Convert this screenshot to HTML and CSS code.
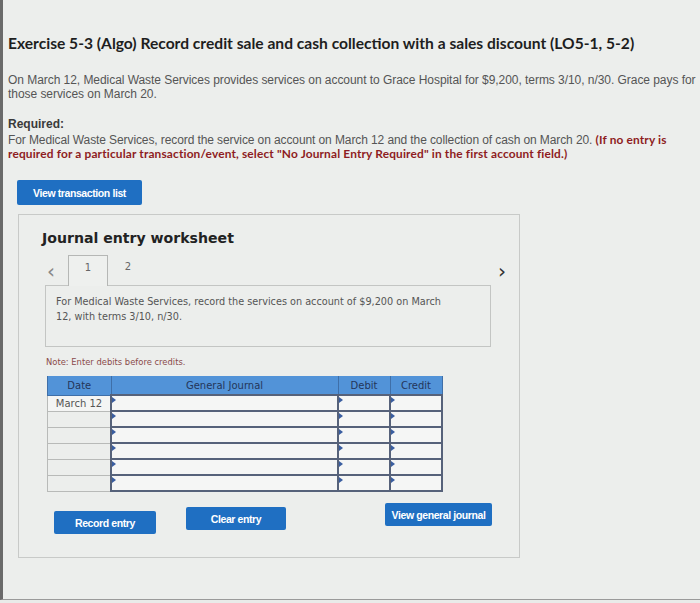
FILE: index.html
```html
<!DOCTYPE html>
<html lang="en">
<head>
    <meta charset="UTF-8">
    <meta name="viewport" content="width=device-width, initial-scale=1.0">
    <title>Exercise 5-3 (Algo)</title>
    <link rel="stylesheet" href="styles.css">
</head>
<body>
  <div class="page">
    <h1 class="title">Exercise 5-3 (Algo) Record credit sale and cash collection with a sales discount (LO5-1, 5-2)</h1>

    <p class="intro">On March 12, Medical Waste Services provides services on account to Grace Hospital for $9,200, terms 3/10, n/30. Grace pays for<br>those services on March 20.</p>

    <div class="required">
        <div class="req-label">Required:</div>
        <p>For Medical Waste Services, record the service on account on March 12 and the collection of cash on March 20. <strong class="warn">(If no entry is<br>required for a particular transaction/event, select "No Journal Entry Required" in the first account field.)</strong></p>
    </div>

    <button class="btn btn-list">View transaction list</button>

    <div class="worksheet">
        <h2>Journal entry worksheet</h2>

        <div class="tabs">
            <span class="arrow">&lsaquo;</span>
            <span class="tab active">1</span>
            <span class="tab">2</span>
            <span class="arrow arrow-next">&rsaquo;</span>
        </div>

        <div class="tab-body">
            For Medical Waste Services, record the services on account of $9,200 on March<br>12, with terms 3/10, n/30.
        </div>

        <p class="note">Note: Enter debits before credits.</p>

        <table class="journal">
            <thead>
                <tr>
                    <th class="c-date">Date</th>
                    <th class="c-gj">General Journal</th>
                    <th class="c-amt">Debit</th>
                    <th class="c-amt">Credit</th>
                </tr>
            </thead>
            <tbody>
                <tr><td class="c-date">March 12</td><td class="c-gj"></td><td class="c-amt"></td><td class="c-amt"></td></tr>
                <tr><td class="c-date"></td><td class="c-gj"></td><td class="c-amt"></td><td class="c-amt"></td></tr>
                <tr><td class="c-date"></td><td class="c-gj"></td><td class="c-amt"></td><td class="c-amt"></td></tr>
                <tr><td class="c-date"></td><td class="c-gj"></td><td class="c-amt"></td><td class="c-amt"></td></tr>
                <tr><td class="c-date"></td><td class="c-gj"></td><td class="c-amt"></td><td class="c-amt"></td></tr>
                <tr><td class="c-date"></td><td class="c-gj"></td><td class="c-amt"></td><td class="c-amt"></td></tr>
            </tbody>
        </table>

        <div class="actions">
            <button class="btn btn-record">Record entry</button>
            <button class="btn btn-clear">Clear entry</button>
            <button class="btn btn-view">View general journal</button>
        </div>
    </div>
  </div>
</body>
</html>
```

FILE: styles.css
```css
html, body {
    margin: 0;
    padding: 0;
    height: 100%;
}
body {
    background-color: #e9ebe9;
    font-family: "Liberation Sans", Arial, sans-serif;
    color: #333;
}
.page {
    height: 600px;
    border-left: 3px solid #6a6a6a;
    border-bottom: 1px solid #9a9a9a;
    background: #eceeec;
    padding: 34px 0 0 5px;
    box-sizing: border-box;
    overflow: hidden;
}
.title {
    font-family: Lato, "Open Sans", sans-serif;
    font-size: 15.6px;
    font-weight: 700;
    color: #1e1e1e;
    margin: 0 0 21px 0;
    letter-spacing: 0;
}
.intro {
    font-size: 12px;
    letter-spacing: -0.05px;
    line-height: 14px;
    color: #555;
    margin: 0 0 16px 0;
    white-space: nowrap;
}
.required {
    font-size: 12px;
    letter-spacing: -0.1px;
    line-height: 14px;
    color: #555;
    margin-bottom: 19px;
}
.req-label {
    font-weight: 700;
    color: #3a3a3a;
    letter-spacing: 0;
    margin-bottom: 2px;
}
.required p {
    margin: 0;
    white-space: nowrap;
}
.warn {
    font-family: Lato, sans-serif;
    color: #8e1c22;
    font-size: 11.9px;
    letter-spacing: 0.15px;
}
.btn {
    background-color: #1f6fc2;
    color: white;
    border: none;
    border-radius: 2px;
    font-family: "Liberation Sans", Arial, sans-serif;
    font-weight: 700;
    font-size: 10.5px;
    letter-spacing: -0.4px;
    cursor: pointer;
    padding: 0;
}
.btn-list {
    width: 125px;
    height: 25px;
    margin-left: 9px;
    display: block;
}
.worksheet {
    margin: 9px 0 0 10px;
    width: 502px;
    height: 344px;
    box-sizing: border-box;
    border: 1px solid #c8cac8;
    padding: 15px 0 0 23px;
}
.worksheet h2 {
    font-family: "DejaVu Sans", Verdana, sans-serif;
    font-size: 14.1px;
    font-weight: 700;
    color: #222;
    margin: 0 0 9px 0;
}
.tabs {
    display: flex;
    align-items: flex-end;
    height: 31px;
    margin-left: 5px;
    width: 472px;
    font-family: "DejaVu Sans", Verdana, sans-serif;
    font-size: 10px;
    color: #666;
}
.arrow {
    font-size: 20px;
    line-height: 20px;
    color: #888;
    width: 21px;
    align-self: center;
}
.arrow-next {
    margin-left: auto;
    color: #333;
}
.tab {
    width: 40px;
    height: 31px;
    line-height: 24px;
    text-align: center;
    box-sizing: border-box;
}
.tab.active {
    border: 1px solid #b5b7b5;
    border-bottom: none;
    background: #eef0ee;
    position: relative;
    z-index: 1;
}
.tab-body {
    margin-left: 3px;
    width: 446px;
    height: 62px;
    box-sizing: border-box;
    border: 1px solid #c3c5c3;
    margin-top: -1px;
    padding: 8px 0 0 10px;
    font-family: "DejaVu Sans", Verdana, sans-serif;
    font-size: 9.7px;
    line-height: 15px;
    color: #555;
    white-space: nowrap;
}
.note {
    font-family: "DejaVu Sans", Verdana, sans-serif;
    font-size: 8.4px;
    color: #8a4a4a;
    margin: 10px 0 9px 4px;
}
.journal {
    margin-left: 5px;
    border-collapse: collapse;
    font-family: "DejaVu Sans", Verdana, sans-serif;
    font-size: 10px;
}
.journal th {
    background-color: #5293d8;
    color: #24365a;
    font-weight: 400;
    height: 18px;
    padding: 0;
    border: 1px solid #3f6fa8;
    border-top: none;
}
.journal td {
    height: 14px;
    padding: 0;
    background: #f5f6f5;
    border: 2px solid #56627a;
    position: relative;
}
.journal td.c-date {
    border: 1px solid #b8bab8;
    border-right: 2px solid #56627a;
    text-align: center;
    color: #555;
    background: #eceeec;
}
.journal tbody tr:first-child td.c-date {
    background: #f4f5f4;
}
.c-date { width: 62px; }
.c-gj { width: 225px; }
.c-amt { width: 50px; }
.journal td.c-gj::before,
.journal td.c-amt::before {
    content: "";
    position: absolute;
    left: 0;
    top: 1px;
    border-top: 3px solid transparent;
    border-bottom: 3px solid transparent;
    border-left: 4px solid #3a5ea0;
}
.actions {
    display: flex;
    align-items: flex-start;
    margin: 15px 0 0 12px;
}
.actions .btn {
    height: 23px;
}
.btn-record {
    width: 102px;
    margin-top: 4px;
}
.btn-clear {
    width: 100px;
    margin-left: 30px;
}
.btn-view {
    width: 107px;
    margin-left: 99px;
    margin-top: -4px;
}
```
